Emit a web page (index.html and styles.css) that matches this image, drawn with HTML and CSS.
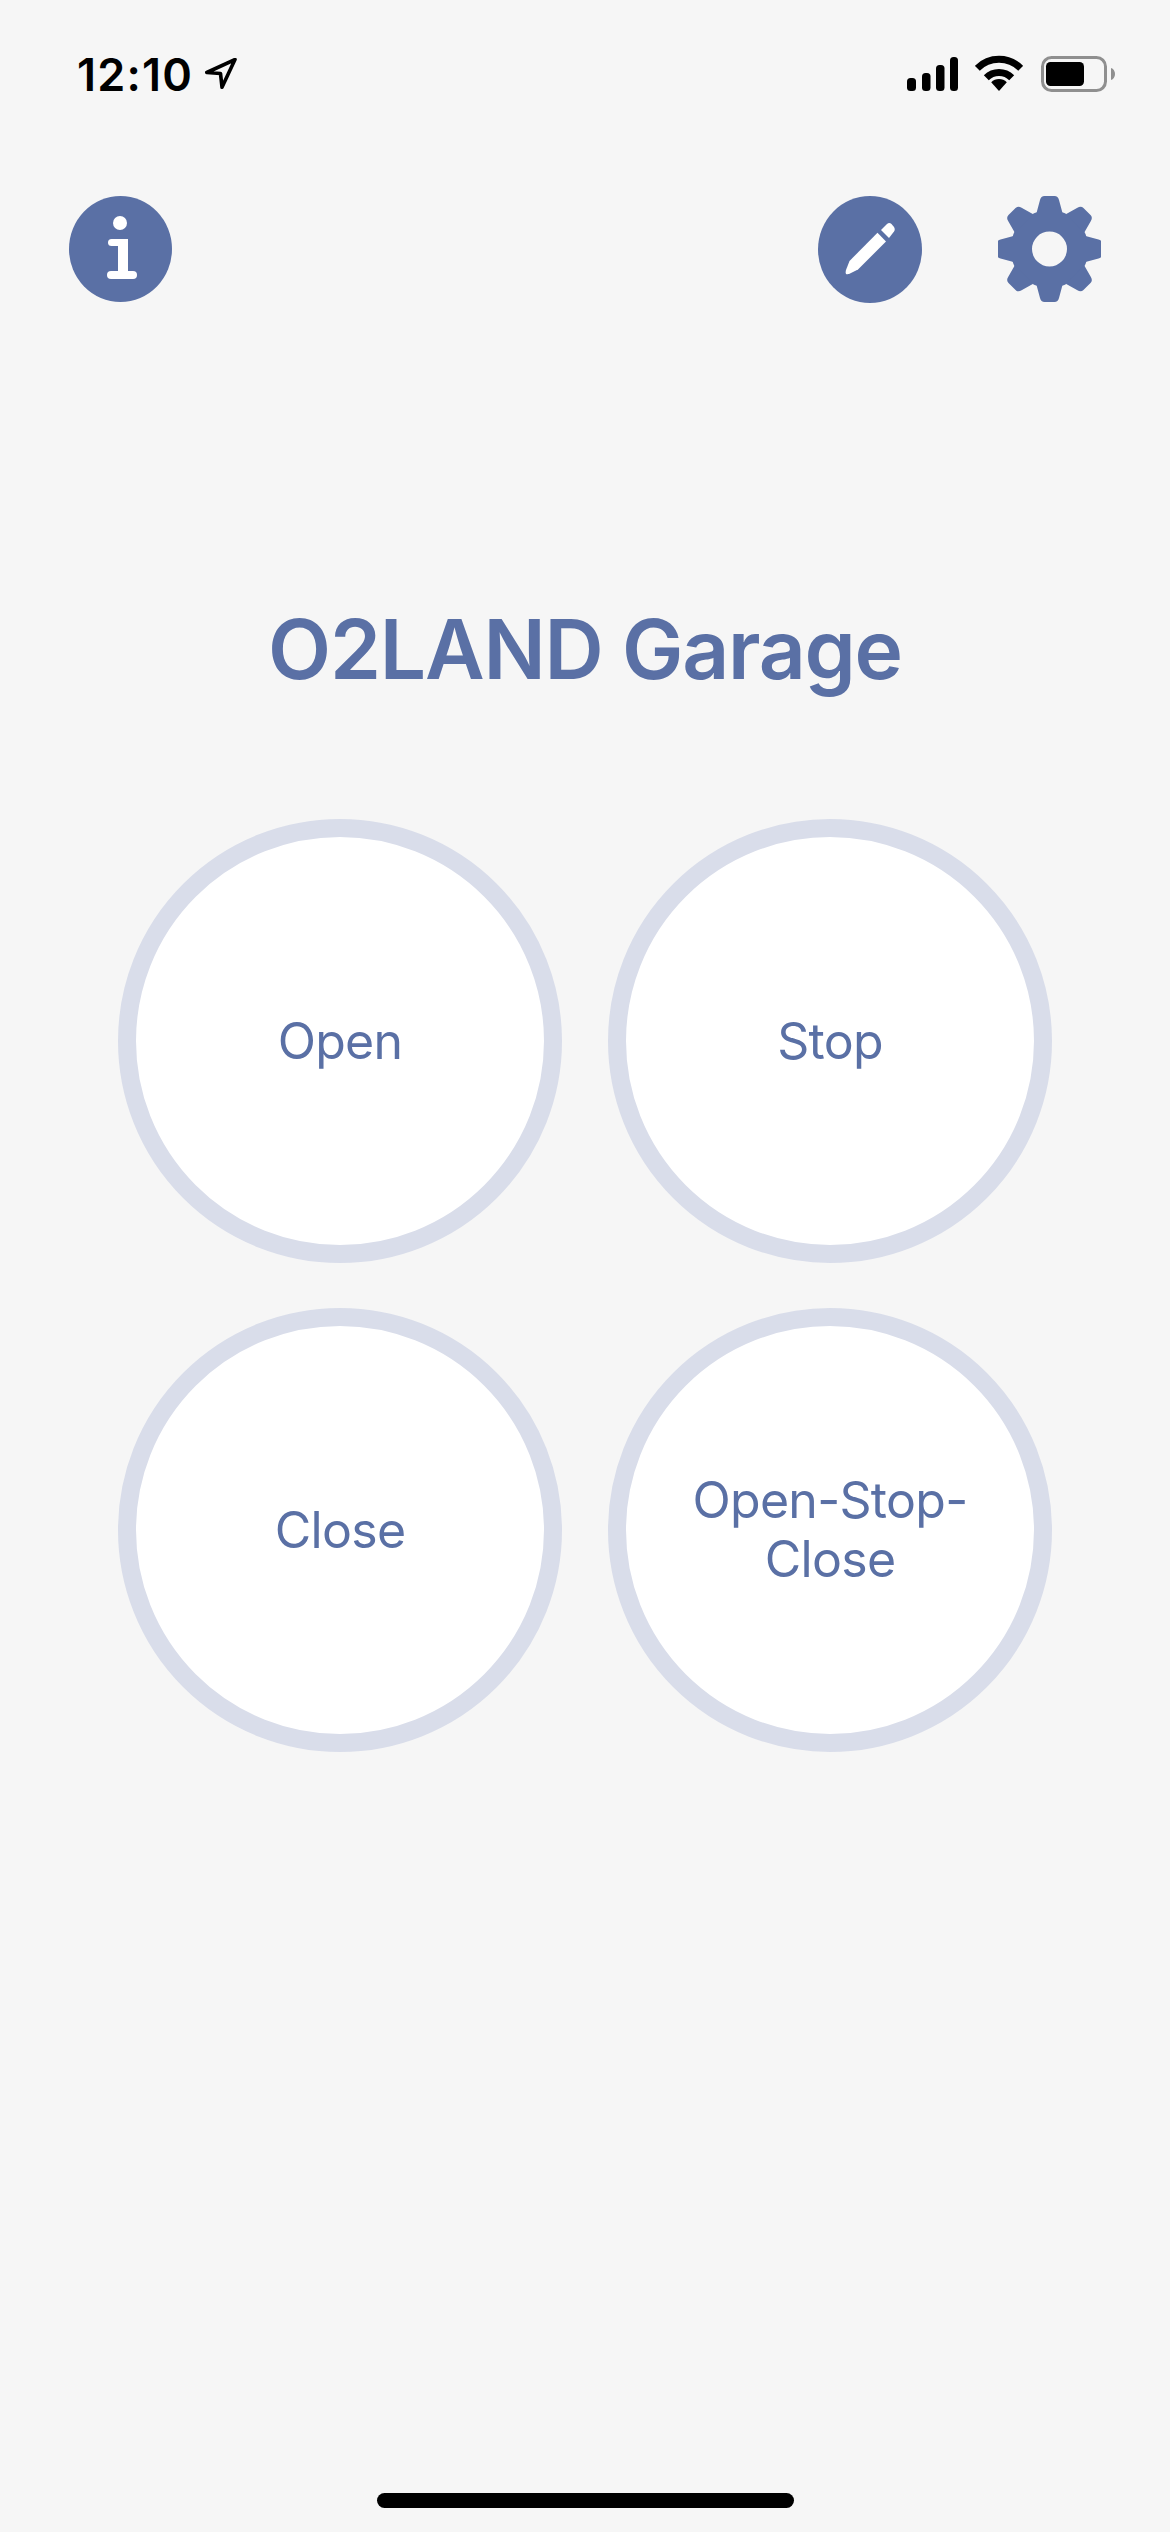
FILE: index.html
```html
<!DOCTYPE html>
<html lang="en">
<head>
<meta charset="utf-8">
<title>O2LAND Garage</title>
<link rel="stylesheet" href="styles.css">
</head>
<body>
<div class="screen">
  <header class="status">
    <div class="status-left">
      <span class="time">12:10</span>
      <svg class="loc" width="32" height="31" viewBox="0 0 32 31"><path d="M30 1.5 1.800 14.500 15.500 15.500 17 29.200Z" fill="none" stroke="#000" stroke-width="3.600" stroke-linejoin="round"/></svg>
    </div>
    <div class="status-right">
      <svg class="signal" width="51" height="34" viewBox="0 0 51 34"><rect x="0" y="21" width="9" height="13" rx="3.500"/><rect x="15" y="16" width="8.500" height="18" rx="3.500"/><rect x="29" y="8" width="8.500" height="26" rx="3.500"/><rect x="43" y="0" width="8" height="34" rx="3.500"/></svg>
      <svg class="wifi" width="48" height="36" viewBox="0 0 48 36"><path d="M24 36 16.200 27.200A11 11 0 0 1 31.800 27.200Z"/><path d="M11.300 22.700A18 18 0 0 1 36.700 22.700" fill="none" stroke="#000" stroke-width="7"/><path d="M2.300 13.300A30.700 30.700 0 0 1 45.700 13.300" fill="none" stroke="#000" stroke-width="7"/></svg>
      <svg class="battery" width="74" height="36" viewBox="0 0 74 36"><rect x="1.500" y="1.500" width="63" height="33" rx="9" fill="none" stroke="#8f8f8f" stroke-width="3"/><rect x="5" y="6" width="38" height="24" rx="4.500"/><path d="M70 12c2.500 .8 4 3 4 6s-1.500 5.200-4 6Z" fill="#8f8f8f"/></svg>
    </div>
  </header>

  <nav class="toolbar">
    <svg class="tool" width="103" height="106" viewBox="0 0 103 106">
      <ellipse cx="51.500" cy="53" rx="51.500" ry="53" fill="#5a70a5"/>
      <circle cx="51" cy="27" r="7" fill="#fff"/>
      <rect x="49" y="43" width="10" height="36" fill="#fff"/>
      <path d="M42.500 46.500H54" fill="none" stroke="#fff" stroke-width="7" stroke-linecap="round"/>
      <path d="M42 79H64" fill="none" stroke="#fff" stroke-width="8" stroke-linecap="round"/>
    </svg>
    <div class="tool-group">
      <svg class="tool" width="104" height="107" viewBox="0 0 104 107">
        <ellipse cx="52" cy="53.500" rx="52" ry="53.500" fill="#5a70a5"/>
        <path d="M28 74C27 78 28 78.500 31 78L40 73.500 68 45.500 59.500 36.700 31.500 65Z" fill="#fff"/>
        <path d="M63 34 69 28C70.500 26.800 72 26.800 73.500 28L76 31C77 32.500 77 34 76 35.500L71 42Z" fill="#fff"/>
      </svg>
      <svg class="tool" width="103" height="106" viewBox="0 0 103 106">
        <g fill="#5a70a5" transform="translate(51.500 53)">
          <path fill-rule="evenodd" d="M-39 0A39 39 0 1 1 39 0A39 39 0 1 1-39 0ZM-17.500 0A17.500 17.500 0 1 0 17.500 0A17.500 17.500 0 1 0-17.500 0Z"/>
          <path id="tooth" d="M-13-36-9.500-49Q-8.500-53-5-53H5Q8.500-53 9.500-49L13-36Z"/>
          <use href="#tooth" transform="rotate(45)"/>
          <use href="#tooth" transform="rotate(90)"/>
          <use href="#tooth" transform="rotate(135)"/>
          <use href="#tooth" transform="rotate(180)"/>
          <use href="#tooth" transform="rotate(225)"/>
          <use href="#tooth" transform="rotate(270)"/>
          <use href="#tooth" transform="rotate(315)"/>
        </g>
      </svg>
    </div>
  </nav>

  <main class="content">
    <h1 class="title">O2LAND Garage</h1>
    <div class="controls">
      <button class="control">Open</button>
      <button class="control">Stop</button>
      <button class="control">Close</button>
      <button class="control">Open-Stop-<br>Close</button>
    </div>
  </main>

  <div class="home-bar"></div>
</div>
</body>
</html>
```

FILE: styles.css
```css
* { box-sizing: border-box; }
html, body { margin: 0; padding: 0; }
body { background: #f6f6f6; font-family: Inter, "Noto Sans", sans-serif; }
.screen {
  height: 2532px;
  display: flex;
  flex-direction: column;
  overflow: hidden;
}
.status {
  height: 96px;
  padding: 55px 55px 0 77px;
  display: flex;
  justify-content: space-between;
  align-items: flex-start;
}
.status-left { display: flex; align-items: flex-start; }
.time {
  font-size: 45px;
  font-weight: 600;
  line-height: 40px;
  letter-spacing: 1.2px;
  color: #000;
}
.loc { margin: 3px 0 0 12px; }
.status-right { display: flex; align-items: flex-start; }
.signal { margin: 2px 17px 0 0; }
.wifi { margin-right: 18px; }
.battery { margin-top: 1px; }
.toolbar {
  margin-top: 100px;
  padding: 0 69px;
  display: flex;
  justify-content: space-between;
  align-items: flex-start;
}
.tool { display: block; }
.tool-group { display: flex; gap: 76px; }
.content { flex: 1; }
.title {
  margin: 297px 0 0;
  height: 100px;
  font-size: 82px;
  line-height: 100px;
  font-weight: 600;
  letter-spacing: -1.2px;
  color: #5a70a5;
  text-align: center;
}
.controls {
  margin-top: 119px;
  display: grid;
  grid-template-columns: 444px 444px;
  gap: 45px 46px;
  justify-content: center;
}
.control {
  width: 444px;
  height: 444px;
  padding: 0;
  border: 18px solid #d9ddea;
  border-radius: 50%;
  background: #fff;
  color: #5a70a5;
  font-family: inherit;
  font-size: 50px;
  line-height: 59px;
  font-weight: 400;
  letter-spacing: -0.7px;
}
.home-bar {
  align-self: center;
  width: 417px;
  height: 15px;
  margin-bottom: 24px;
  border-radius: 8px;
  background: #000;
}
```
